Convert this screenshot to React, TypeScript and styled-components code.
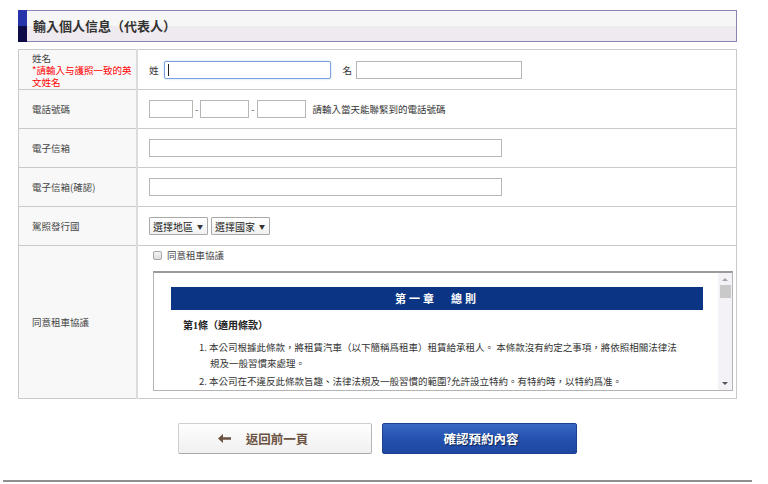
import React from 'react'
import styled, { createGlobalStyle } from 'styled-components'

const GlobalStyle = createGlobalStyle`
html, body {
  margin: 0;
  padding: 0;
  background: #fff;
}
body {
  font-family: "Liberation Sans", "Noto Sans CJK TC", sans-serif;
  color: #333;
}
`;

const Page = styled.div`
width: 768px;
height: 484px;
padding-top: 10px;
box-sizing: border-box;
overflow: hidden;
`;

const Section = styled.div`
margin: 0 31px 0 18px;
`;

const Header = styled.div`
display: flex;
height: 32px;
box-sizing: border-box;
border: 1px solid #8785b5;
border-left: none;
background: linear-gradient(#f6f6f6 50%, #eeeaef 50%);
`;

const Accent = styled.div`
width: 9px;
margin-top: -1px;
margin-bottom: -1px;
background: linear-gradient(#2733a8 50%, #0d0c48 50%);
`;

const Title = styled.h1`
margin: 0;
padding-left: 6px;
font-size: 13px;
font-weight: bold;
line-height: 30px;
color: #333;
font-family: "Noto Sans CJK TC", sans-serif;
`;

const FormTable = styled.table`
margin-top: 7px;
width: 719px;
border-collapse: collapse;
table-layout: fixed;
border: 1px solid #c9c9c9;
font-size: 9.5px;
`;

type RowProps = {
  $h: number;
}

const LabelCell = styled.td`
width: 103px;
height: ${({ $h }: RowProps) => `${$h}px`};
padding: 0 1px 0 13px;
background: #f8f8f8;
border: 1px solid #cacaca;
border-right: 2px solid #dcdcdc;
vertical-align: middle;
line-height: 12px;
color: #444;
font-family: "Noto Sans CJK TC", sans-serif;
`;

const ValueCell = styled.td`
padding: 0 3px 0 11px;
border: 1px solid #cacaca;
background: #fff;
vertical-align: ${({ $top }: { $top?: boolean }) => ($top ? 'top' : 'middle')};
font-family: "Noto Sans CJK TC", sans-serif;
`;

const Required = styled.div`
color: #ff0000;
line-height: 12px;
`;

const FieldRow = styled.div`
display: flex;
align-items: center;
`;

type InputProps = {
  $w: number;
  $focus?: boolean;
}

const InputWrap = styled.span`
position: relative;
display: inline-flex;
margin-right: ${({ $gap = 0 }: { $gap?: number }) => `${$gap}px`};
`;

const TextInput = styled.input`
width: ${({ $w }: InputProps) => `${$w}px`};
height: 18px;
box-sizing: border-box;
margin: 0;
padding: 0 3px;
border: 1px solid ${({ $focus }: InputProps) => ($focus ? '#7da2dc' : '#b7b7b7')};
border-radius: ${({ $focus }: InputProps) => ($focus ? '2px' : '0')};
box-shadow: ${({ $focus }: InputProps) => ($focus ? '0 0 2px #a9c4ee' : 'none')};
outline: none;
background: #fff;
font-size: 10px;
`;

const Caret = styled.span`
position: absolute;
left: 4px;
top: 3px;
width: 1px;
height: 12px;
background: #222;
`;

const FieldLabel = styled.span`
margin-right: ${({ $gap = 5 }: { $gap?: number }) => `${$gap}px`};
color: #333;
`;

const Dash = styled.span`
margin: 0 2px;
color: #555;
`;

const Hint = styled.span`
margin-left: 7px;
color: #333;
`;

const SelectBox = styled.span`
display: inline-flex;
align-items: center;
gap: 4px;
height: 18px;
box-sizing: border-box;
padding: 0 4px 0 3px;
margin-right: 3px;
border: 1px solid #a9a9a9;
border-radius: 1px;
background: linear-gradient(#ffffff, #f1f1f1);
font-size: 10px;
color: #222;
`;

const SelectArrow = styled.span`
font-size: 6px;
color: #333;
`;

const AgreeLine = styled.div`
display: flex;
align-items: center;
gap: 5px;
margin: 4px 0 0 4px;
height: 10px;
color: #444;
`;

const CheckBox = styled.span`
width: 9px;
height: 9px;
box-sizing: border-box;
border: 1px solid #a6a6a6;
border-radius: 2px;
background: linear-gradient(#f4f4f4, #dedede);
`;

const ScrollFrame = styled.div`
display: flex;
height: 120px;
box-sizing: border-box;
margin: 11px 0 7px 4px;
border: 1px solid #b4b4b4;
border-top: 2px solid #9b9b9b;
background: #fff;
`;

const FrameBody = styled.div`
flex: 1;
overflow: hidden;
padding: 14px 15px 0 17px;
`;

const ChapterBar = styled.div`
height: 23px;
background: #0b3584;
color: #fff;
font-weight: bold;
font-size: 11px;
letter-spacing: 3px;
line-height: 23px;
text-align: center;
white-space: pre;
`;

const ArticleTitle = styled.div`
margin: 9px 0 0 12px;
font-size: 10px;
font-weight: bold;
line-height: 14px;
color: #222;
font-family: "Liberation Serif", "Noto Sans CJK TC", serif;
`;

const Clause = styled.div`
margin: ${({ $first }: { $first?: boolean }) => ($first ? '6px' : '2px')} 0 0 28px;
padding-left: 11px;
text-indent: -11px;
font-size: 9.5px;
line-height: 16px;
white-space: nowrap;
color: #333;
`;

const ScrollTrack = styled.div`
width: 14px;
background: #f4f2f6;
display: flex;
flex-direction: column;
align-items: center;
`;

const ArrowUp = styled.span`
margin-top: 5px;
width: 0;
height: 0;
border-left: 3px solid transparent;
border-right: 3px solid transparent;
border-bottom: 3px solid #a5a5a5;
`;

const Thumb = styled.span`
margin-top: 4px;
width: 11px;
height: 13px;
background: #c9c9c9;
`;

const ArrowDown = styled.span`
margin-top: auto;
margin-bottom: 5px;
width: 0;
height: 0;
border-left: 3px solid transparent;
border-right: 3px solid transparent;
border-top: 3px solid #555;
`;

const ButtonRow = styled.div`
display: flex;
justify-content: center;
gap: 10px;
margin-top: 24px;
`;

const BackButton = styled.button`
display: flex;
align-items: center;
justify-content: center;
gap: 15px;
width: 194px;
height: 31px;
box-sizing: border-box;
border: 1px solid #cfcfcf;
border-bottom-color: #a8a8a8;
border-right-color: #b5b5b5;
border-radius: 2px;
background: linear-gradient(#fefefe, #f0f0f0);
color: #6b5241;
font-weight: bold;
font-size: 12.5px;
font-family: "Noto Sans CJK TC", sans-serif;
padding: 0 24px 0 0;
`;

const ConfirmButton = styled.button`
width: 195px;
height: 31px;
box-sizing: border-box;
border: 1px solid #1d418f;
border-radius: 2px;
background: linear-gradient(#3867c4, #2552b0 50%, #1d47a0);
color: #fff;
font-weight: bold;
font-size: 12.5px;
font-family: "Noto Sans CJK TC", sans-serif;
text-shadow: 1px 1px 1px #0d2151;
padding: 0 0 0 3px;
`;

const Divider = styled.div`
margin: 26px 16px 0 3px;
height: 2px;
background: #8f8f8f;
`;

const BackArrow = () => (
  <svg width="13" height="9" viewBox="0 0 13 9">
    <path d="M0 4.5 L5 0 L5 3.3 L13 3.3 L13 5.7 L5 5.7 L5 9 Z" fill="#6b5241" />
  </svg>
)

export default () => {
  return (
    <Page>
      <GlobalStyle />
      <Section>
        <Header>
          <Accent />
          <Title>輸入個人信息（代表人）</Title>
        </Header>

        <FormTable>
          <tbody>
            <tr>
              <LabelCell $h={39}>
                姓名
                <Required>*請輸入与護照一致的英文姓名</Required>
              </LabelCell>
              <ValueCell>
                <FieldRow>
                  <FieldLabel>姓</FieldLabel>
                  <InputWrap $gap={12}>
                    <TextInput $w={167} $focus />
                    <Caret />
                  </InputWrap>
                  <FieldLabel $gap={4}>名</FieldLabel>
                  <TextInput $w={166} />
                </FieldRow>
              </ValueCell>
            </tr>
            <tr>
              <LabelCell $h={38}>電話號碼</LabelCell>
              <ValueCell>
                <FieldRow>
                  <TextInput $w={44} />
                  <Dash>-</Dash>
                  <TextInput $w={49} />
                  <Dash>-</Dash>
                  <TextInput $w={49} />
                  <Hint>請輸入當天能聯緊到的電話號碼</Hint>
                </FieldRow>
              </ValueCell>
            </tr>
            <tr>
              <LabelCell $h={38}>電子信箱</LabelCell>
              <ValueCell>
                <FieldRow>
                  <TextInput $w={353} />
                </FieldRow>
              </ValueCell>
            </tr>
            <tr>
              <LabelCell $h={38}>電子信箱(確認)</LabelCell>
              <ValueCell>
                <FieldRow>
                  <TextInput $w={353} />
                </FieldRow>
              </ValueCell>
            </tr>
            <tr>
              <LabelCell $h={38}>駕照發行國</LabelCell>
              <ValueCell>
                <FieldRow>
                  <SelectBox>
                    選擇地區
                    <SelectArrow>▼</SelectArrow>
                  </SelectBox>
                  <SelectBox>
                    選擇國家
                    <SelectArrow>▼</SelectArrow>
                  </SelectBox>
                </FieldRow>
              </ValueCell>
            </tr>
            <tr>
              <LabelCell $h={150}>同意租車協議</LabelCell>
              <ValueCell $top>
                <AgreeLine>
                  <CheckBox />
                  同意租車協議
                </AgreeLine>
                <ScrollFrame>
                  <FrameBody>
                    <ChapterBar>{'第一章　總則'}</ChapterBar>
                    <ArticleTitle>第1條（適用條款）</ArticleTitle>
                    <Clause $first>
                      1. 本公司根據此條款，將租賃汽車（以下簡稱爲租車）租賃給承租人。 本條款沒有約定之事項，將依照相關法律法
                      <br />
                      規及一般習慣來處理。
                    </Clause>
                    <Clause>
                      2. 本公司在不違反此條款旨趣、法律法規及一般習慣的範圍?允許設立特約。有特約時，以特約爲准。
                    </Clause>
                  </FrameBody>
                  <ScrollTrack>
                    <ArrowUp />
                    <Thumb />
                    <ArrowDown />
                  </ScrollTrack>
                </ScrollFrame>
              </ValueCell>
            </tr>
          </tbody>
        </FormTable>

        <ButtonRow>
          <BackButton>
            <BackArrow />
            返回前一頁
          </BackButton>
          <ConfirmButton>確認預約內容</ConfirmButton>
        </ButtonRow>
      </Section>
      <Divider />
    </Page>
  )
}
